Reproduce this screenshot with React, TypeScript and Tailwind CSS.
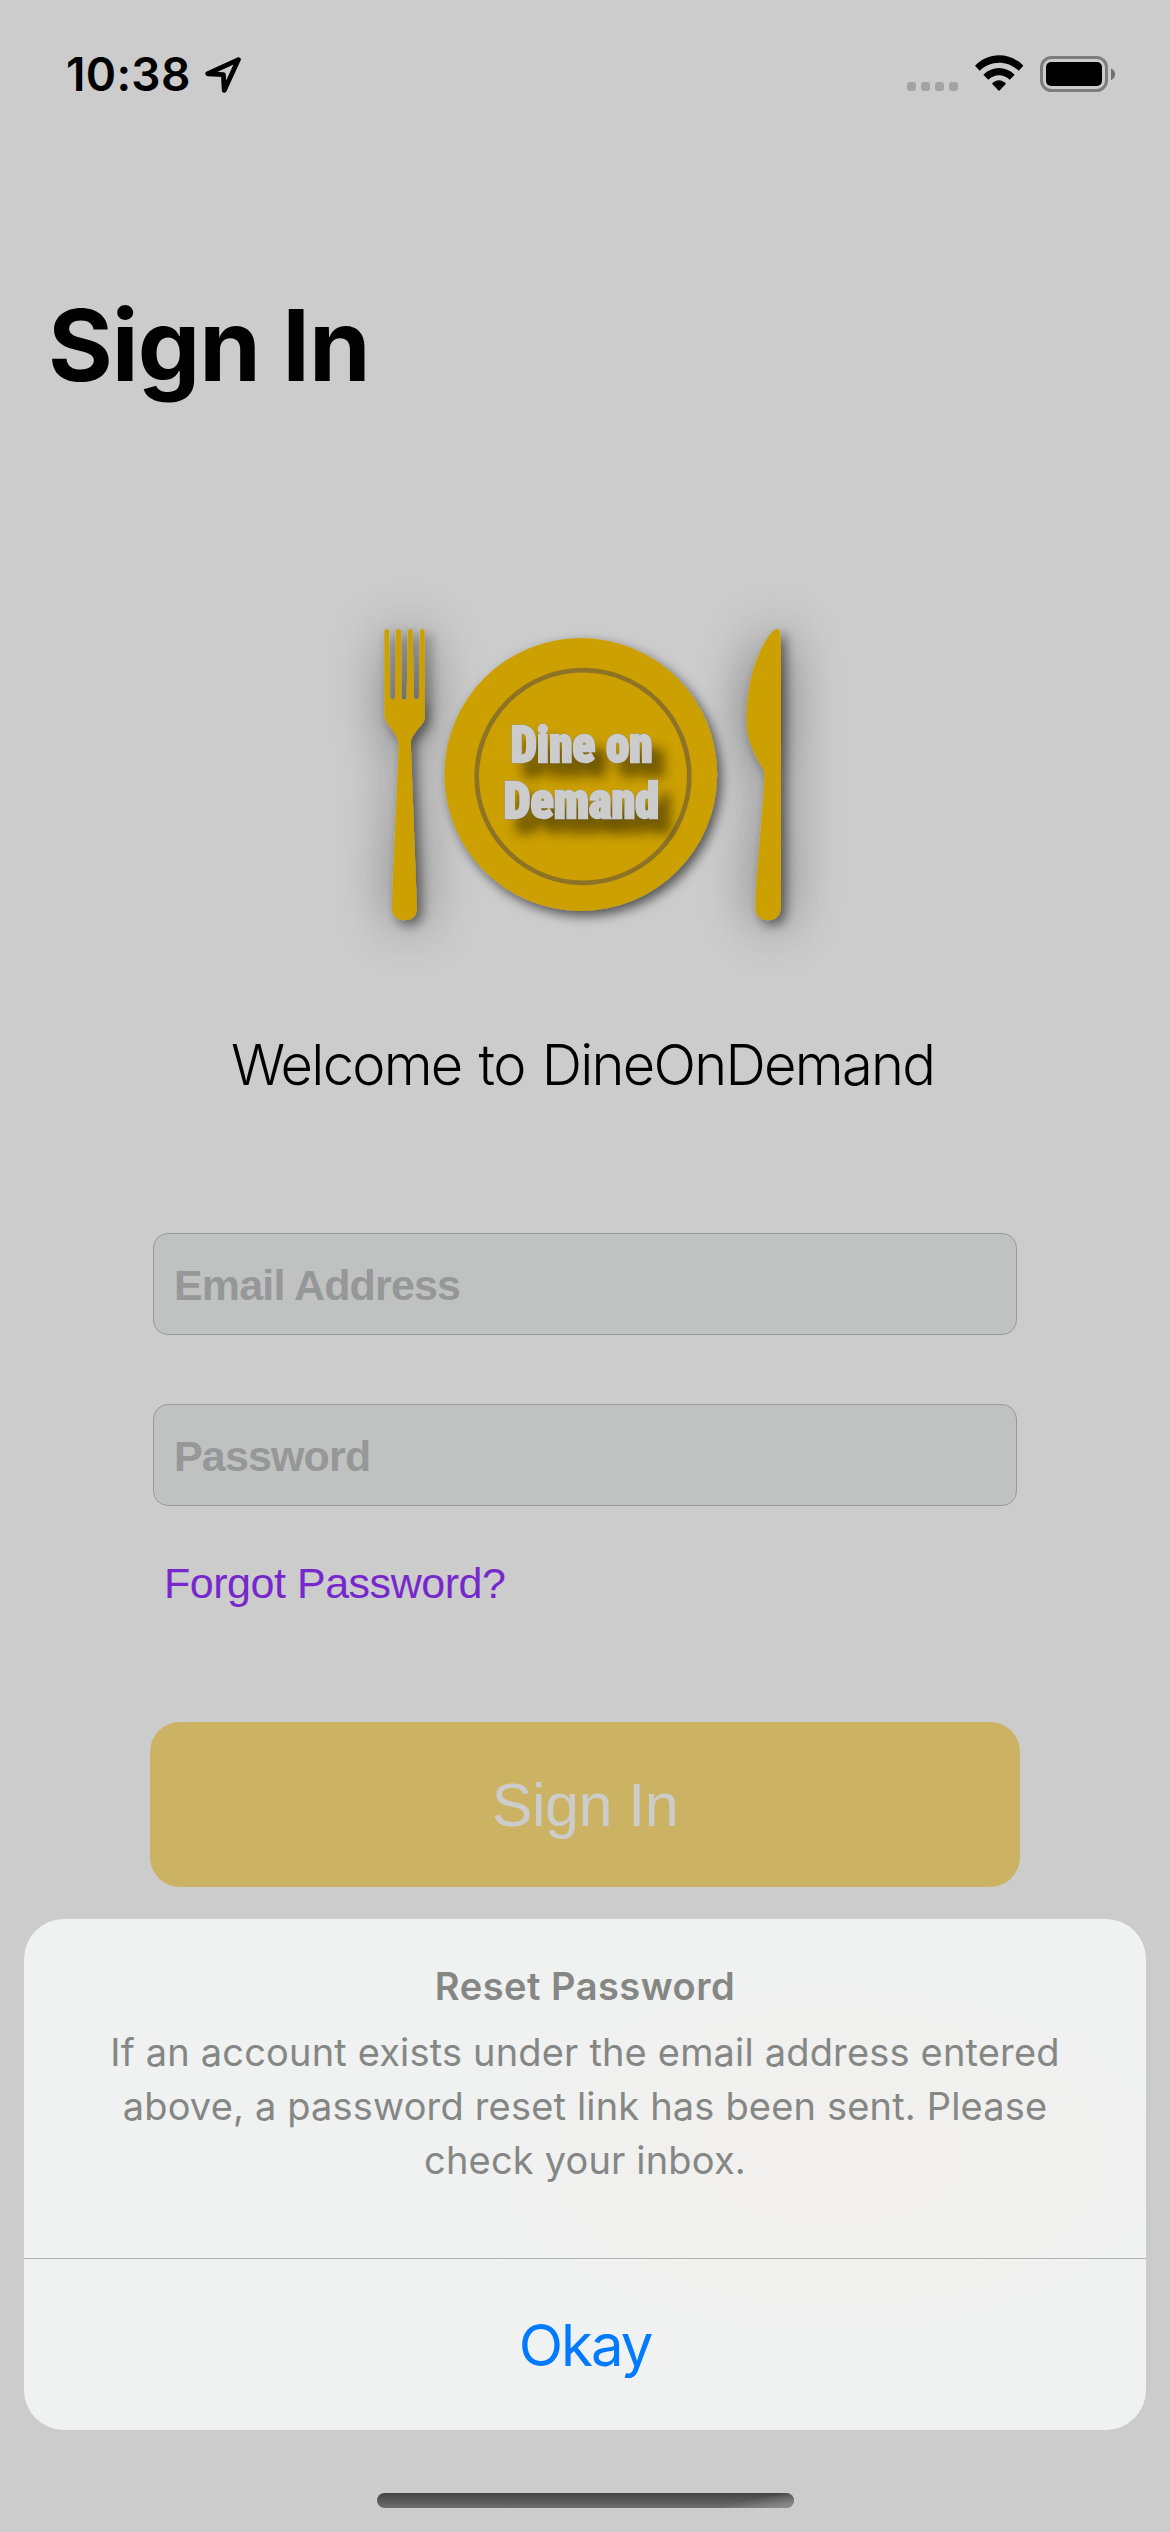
import type { ReactNode } from "react";

function StatusBar() {
  return (
    <header className="flex h-[148px] items-start justify-between pt-[44px] pr-[54px] pl-[66px]">
      <div className="flex items-start">
        <span className="text-[46px] leading-[60px] font-semibold tracking-[0.3px]">10:38</span>
        <svg className="mt-[11px] ml-[12px] h-[40px] w-[40px]" viewBox="202 55 40 40" fill="none">
          <path
            d="M237.4 59.6 206.8 73.800 222.400 74.600 223.200 90.400Z"
            stroke="#000"
            strokeWidth="4.8"
            strokeLinejoin="round"
          />
        </svg>
      </div>
      <div className="flex items-start">
        <div className="mt-[38px] flex gap-[5px]">
          <span className="size-[9px] rounded-[3px] bg-[#a3a3a3]" />
          <span className="size-[9px] rounded-[3px] bg-[#a3a3a3]" />
          <span className="size-[9px] rounded-[3px] bg-[#a3a3a3]" />
          <span className="size-[9px] rounded-[3px] bg-[#a3a3a3]" />
        </div>
        <svg className="mt-[10px] ml-[16px] h-[38px] w-[50px]" viewBox="880 30 50 38">
          <g transform="translate(880 30) scale(.33333) translate(-282 -72)">
            <path d="M285 107C325 65 389 65 430 107L416 122C383 90 331 90 299 122Z" />
            <path d="M310 134C337 107 377 107 404 134L389 149C371 131 343 131 325 149Z" />
            <path d="M336 161C348 147 366 147 378 161L357 183Z" />
          </g>
        </svg>
        <svg className="mt-[11px] ml-[15px] h-[38px] w-[77px]" viewBox="1039 55 77 38">
          <rect x="1041.5" y="57.5" width="65" height="33" rx="10" fill="none" stroke="#7d7d7d" strokeWidth="3" />
          <rect x="1046" y="62" width="56" height="24" rx="5" />
          <path d="M1111 68.5C1116.500 71 1116.500 77.500 1111 80Z" fill="#6f6f6f" />
        </svg>
      </div>
    </header>
  );
}

function Logo() {
  return (
    <svg className="ml-[330px] h-[400px] w-[510px] overflow-visible" viewBox="330 570 510 400">
      <defs>
        <filter id="cutlery" x="-300%" y="-35%" width="700%" height="170%">
          <feDropShadow dx="5" dy="5" stdDeviation="6" floodColor="#000" floodOpacity="0.5" />
          <feDropShadow dx="1" dy="2" stdDeviation="26" floodColor="#000" floodOpacity="0.48" />
        </filter>
        <filter id="dish" x="-20%" y="-20%" width="150%" height="150%">
          <feDropShadow dx="4" dy="5" stdDeviation="6" floodColor="#000" floodOpacity="0.6" />
        </filter>
      </defs>
      <g filter="url(#cutlery)" fill="#cca000">
        <path
          transform="translate(330 570) scale(.33333)"
          d="M163 184q1-7 7-7q6 0 7 7L180 380Q182 388 188 388Q194 388 195 380L198 184q1-7 7-7q7 0 8 7L215 388H230L234 184q0-7 7-7q6 0 7 7L251 380q2 8 8 8q7 0 8-8L270 184q1-7 7-7q6 0 7 7L285 445Q282 458 272 468Q243 500 243 514V540L261 1020Q255 1051 223 1051Q192 1051 186 1020Q186 960 192 850L205 560V514Q203 500 178 468Q163 452 163 430Z"
        />
      </g>
      <g filter="url(#cutlery)" fill="#cca000">
        <path
          transform="translate(580 570) scale(.33333)"
          d="M586 178Q599 175 600 186L603 240V1015Q598 1051 565 1051Q532 1051 526 1020Q526 980 532 900L553 640V605Q550 597 538 578Q498 510 499 450Q500 330 540 245Q565 190 586 178Z"
        />
      </g>
      <circle cx="580.8" cy="774.500" r="136.400" fill="#cca000" filter="url(#dish)" />
      <circle cx="583" cy="776.500" r="106.300" fill="none" stroke="#8f7325" strokeWidth="4.700" />
      <g
        className="font-['Roboto'] text-[50px] font-black [filter:drop-shadow(0_0_0.7px_#555)_drop-shadow(12px_14px_6px_rgba(0,0,0,0.48))] [font-stretch:75%]"
        fill="#cccccc"
        stroke="#cccccc"
        strokeWidth="2.4"
      >
        <text x="510.500" y="762" textLength="142" lengthAdjust="spacingAndGlyphs">Dine on</text>
        <text x="503.500" y="817.500" textLength="155.500" lengthAdjust="spacingAndGlyphs">Demand</text>
      </g>
    </svg>
  );
}

function Field({ children }: { children: ReactNode }) {
  return (
    <div className="flex h-[102px] w-[864px] items-center rounded-[15px] border border-[#989a99] bg-[#c0c2c1] pt-[2px] pl-[20px] font-['Liberation_Sans'] text-[43px] font-bold tracking-[-0.85px] text-[#969798]">
      {children}
    </div>
  );
}

export default function App() {
  return (
    <div className="relative h-[2532px] w-[1170px] overflow-hidden bg-[#cccccc] font-['Inter',sans-serif] text-black">
      <StatusBar />
      <h1 className="mt-[137px] pl-[48px] text-[99px] leading-[120px] font-bold tracking-[-1px]">Sign In</h1>
      <div className="mt-[165px]">
        <Logo />
      </div>
      <p className="mt-[55px] pl-[231px] text-[56px] leading-[80px] font-light tracking-[-1.72px] whitespace-nowrap [word-spacing:3px]">
        Welcome to DineOnDemand
      </p>
      <form className="mt-[128px] flex flex-col pl-[153px]">
        <Field>Email Address</Field>
        <div className="h-[69px]" />
        <Field>Password</Field>
        <a className="mt-[47px] ml-[11px] font-['Liberation_Sans'] text-[43px] leading-[60px] tracking-[-0.47px] text-[#7628cc]">
          Forgot Password?
        </a>
        <button
          type="button"
          className="mt-[109px] -ml-[3px] flex h-[165px] w-[870px] items-center justify-center rounded-[30px] bg-[#ccb364] pt-[2px] font-['Liberation_Sans'] text-[61px] tracking-[-0.5px] text-[#cccccc]"
        >
          Sign In
        </button>
      </form>

      <section className="absolute top-[1919px] left-[24px] flex h-[511px] w-[1122px] flex-col rounded-[40px] bg-[#f0f1f1] bg-[radial-gradient(ellipse_380px_200px_at_805px_240px,#f1f0ed,#f0f1f1)] text-center text-[#858785]">
        <div className="h-[339px] pt-[40px]">
          <h2 className="text-[38px] leading-[54px] font-semibold tracking-[0.5px]">Reset Password</h2>
          <p className="mt-[12px] text-[38px] leading-[54px] tracking-[0.17px]">
            If an account exists under the email address entered
            <br />
            above, a password reset link has been sent. Please
            <br />
            check your inbox.
          </p>
        </div>
        <button
          type="button"
          className="flex flex-1 items-center justify-center border-t border-[#b0b3b2] pt-[2px] text-[58px] tracking-[-2px] text-[#007aff]"
        >
          Okay
        </button>
      </section>
      <div className="absolute top-[2493px] left-[377px] flex h-[15px] w-[417px] overflow-hidden rounded-full bg-linear-to-b from-[#434443] to-[#6c6d6c]">
        <div className="ml-auto w-[70px] bg-linear-to-br from-transparent from-40% to-[#909190]" />
      </div>
    </div>
  );
}
